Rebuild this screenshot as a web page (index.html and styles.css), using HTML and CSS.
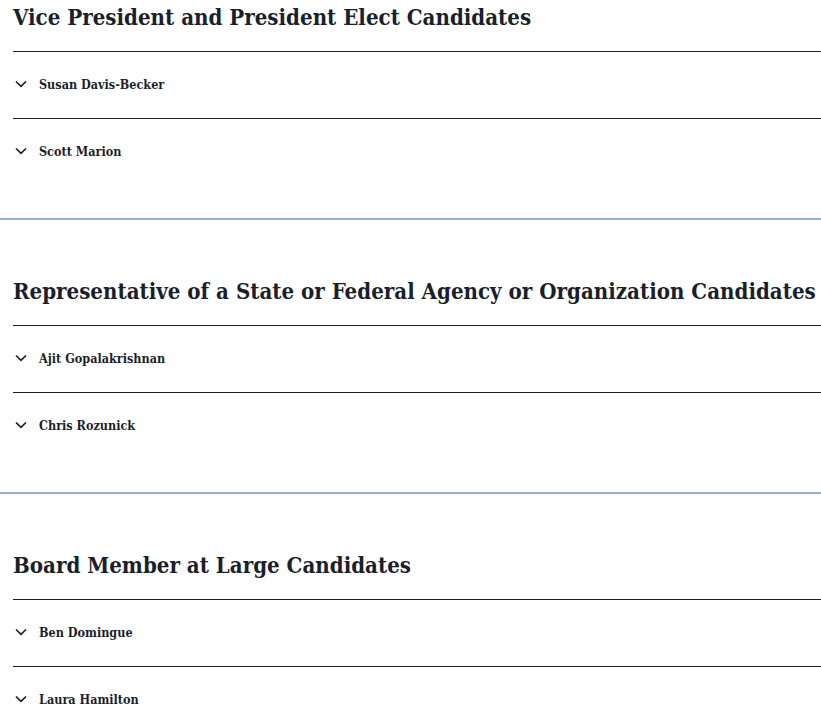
FILE: index.html
```html
<!DOCTYPE html>
<html lang="en">
<head>
<meta charset="utf-8">
<title>Candidates</title>
<link rel="stylesheet" href="styles.css">
</head>
<body>
<section class="group">
  <h2 class="group-title">Vice President and President Elect Candidates</h2>
  <ul class="list">
    <li class="item"><span class="chev"><svg viewBox="0 0 12 8" width="12" height="8"><path d="M1 1.5 L6 6.3 L11 1.5" fill="none" stroke="currentColor" stroke-width="1.7"/></svg></span><span class="name">Susan Davis-Becker</span></li>
    <li class="item"><span class="chev"><svg viewBox="0 0 12 8" width="12" height="8"><path d="M1 1.5 L6 6.3 L11 1.5" fill="none" stroke="currentColor" stroke-width="1.7"/></svg></span><span class="name">Scott Marion</span></li>
  </ul>
</section>
<section class="group">
  <h2 class="group-title">Representative of a State or Federal Agency or Organization Candidates</h2>
  <ul class="list">
    <li class="item"><span class="chev"><svg viewBox="0 0 12 8" width="12" height="8"><path d="M1 1.5 L6 6.3 L11 1.5" fill="none" stroke="currentColor" stroke-width="1.7"/></svg></span><span class="name">Ajit Gopalakrishnan</span></li>
    <li class="item"><span class="chev"><svg viewBox="0 0 12 8" width="12" height="8"><path d="M1 1.5 L6 6.3 L11 1.5" fill="none" stroke="currentColor" stroke-width="1.7"/></svg></span><span class="name">Chris Rozunick</span></li>
  </ul>
</section>
<section class="group">
  <h2 class="group-title">Board Member at Large Candidates</h2>
  <ul class="list">
    <li class="item"><span class="chev"><svg viewBox="0 0 12 8" width="12" height="8"><path d="M1 1.5 L6 6.3 L11 1.5" fill="none" stroke="currentColor" stroke-width="1.7"/></svg></span><span class="name">Ben Domingue</span></li>
    <li class="item"><span class="chev"><svg viewBox="0 0 12 8" width="12" height="8"><path d="M1 1.5 L6 6.3 L11 1.5" fill="none" stroke="currentColor" stroke-width="1.7"/></svg></span><span class="name">Laura Hamilton</span></li>
  </ul>
</section>
</body>
</html>
```
FILE: styles.css
```css
html, body {
  margin: 0;
  padding: 0;
  background: #ffffff;
}
body {
  color: #1b1f2b;
  font-family: "DejaVu Serif Condensed", "DejaVu Serif", serif;
  overflow: hidden;
}
.group {
  padding: 0 0 0 13px;
  border-bottom: 2px solid #94b0d6;
}
.group + .group {
  padding-top: 54px;
}
.group-title {
  margin: 0;
  height: 51px;
  box-sizing: border-box;
  padding-top: 3px;
  font-size: 22.1px;
  line-height: 28px;
  font-weight: 700;
  white-space: nowrap;
}
.list {
  list-style: none;
  margin: 0;
  padding: 0 0 33px 0;
}
.item {
  display: flex;
  align-items: center;
  gap: 12px;
  height: 67px;
  border-top: 1px solid #1b1f2b;
  box-sizing: border-box;
  padding: 0 0 2px 2px;
}
.chev {
  display: flex;
  width: 12px;
  color: #1b1f2b;
}
.name {
  font-size: 12.5px;
  font-weight: 700;
}
```
